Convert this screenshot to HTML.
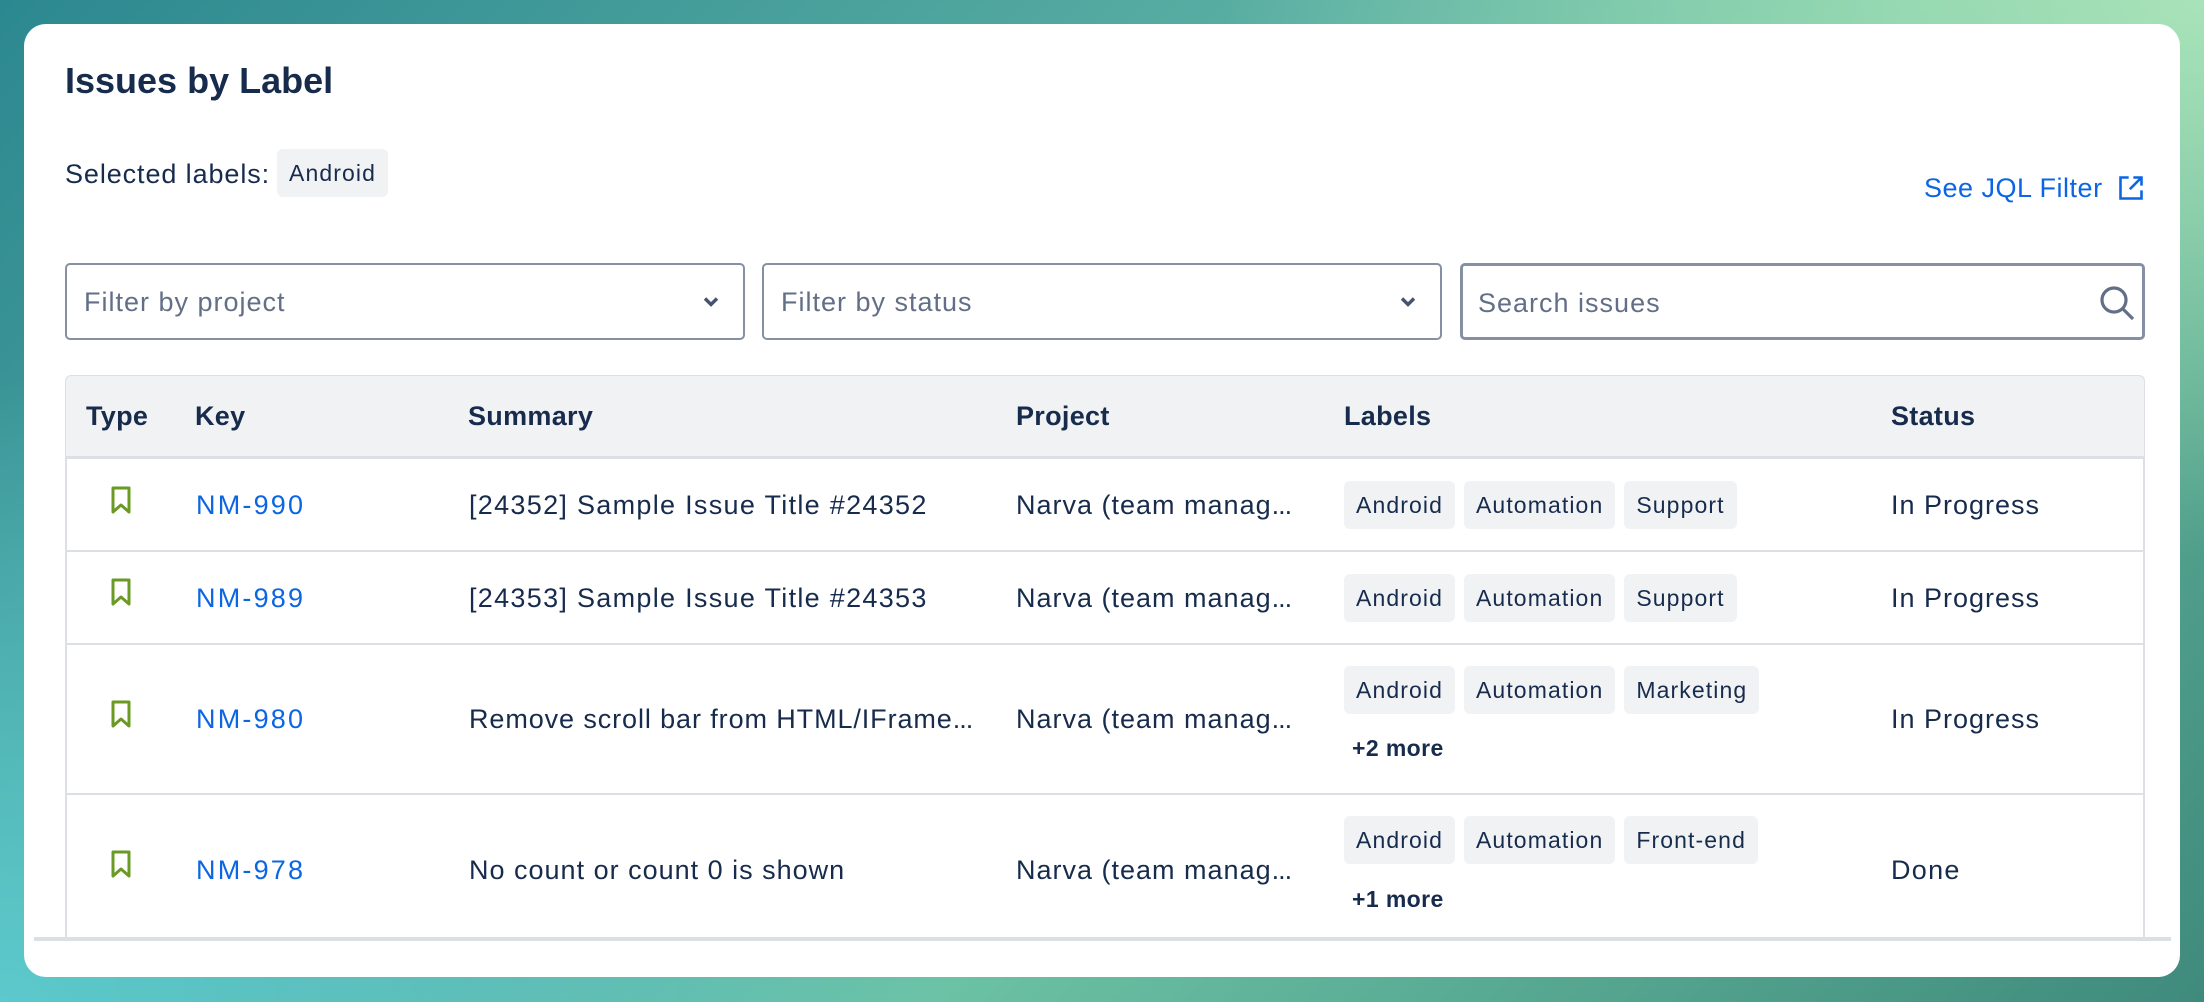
<!DOCTYPE html>
<html><head><meta charset="utf-8"><style>
*{margin:0;padding:0;box-sizing:border-box}
html,body{width:2204px;height:1002px;overflow:hidden}
body{font-family:"Liberation Sans",sans-serif;color:#172B4D;position:relative;
background:
radial-gradient(ellipse 1400px 900px at 0% 100%, #5cc9cc 0%, rgba(92,201,204,0) 70%),
radial-gradient(ellipse 1400px 800px at 100% 0%, #a9e3b8 0%, rgba(169,227,184,0) 70%),
linear-gradient(135deg,#2c8890 0%,#5fb3a5 45%,#6cc2a4 60%,#3f8a7c 100%);}
.a{position:absolute;white-space:nowrap}
.card{position:absolute;left:24px;top:24px;width:2156px;height:953px;background:#fff;border-radius:22px}
.t{font-size:27px;line-height:1;letter-spacing:1.3px}
.e{letter-spacing:-1px}
.tags{position:absolute;left:1344px;display:flex;gap:9px}
.tag{background:#F1F2F4;border-radius:6px;height:48px;font-size:23px;line-height:48px;padding:0 12px;color:#172B4D;letter-spacing:1.1px;white-space:nowrap}
.ptag{position:absolute}
.inp{position:absolute;top:263px;height:77px;border:2px solid #8590A2;border-radius:5px;background:#fff}
.ph{position:absolute;left:17px;top:24px;font-size:27px;color:#626F86;line-height:1;letter-spacing:1.0px;white-space:nowrap}
.hl{position:absolute;left:65px;width:2080px;height:2px;background:#DCDFE4}
.h{font-weight:bold;top:403px;letter-spacing:0.3px}
.key{color:#0C66E4;letter-spacing:2.2px}
.bm{position:absolute;left:111px}
.more{position:absolute;left:1352px;font-size:23px;font-weight:bold;line-height:1;letter-spacing:0.4px;white-space:nowrap}
.st{letter-spacing:1.0px}
</style></head><body>
<div class="card"></div>
<div class="a" style="left:65px;top:63px;font-size:36px;font-weight:bold;line-height:1">Issues by Label</div>
<div class="a t" style="left:65px;top:161px;letter-spacing:0.9px">Selected labels:</div>
<div class="tag ptag" style="left:277px;top:149px">Android</div>
<div class="a t" style="left:1924px;top:175px;color:#0C66E4;letter-spacing:0.5px">See JQL Filter</div>
<svg class="a" style="left:2117px;top:174px" width="28" height="28" viewBox="0 0 24 24" fill="none" stroke="#0C66E4" stroke-width="2.2"><path d="M10 3H3v18h18v-7"/><path d="M14 3h7v7M21 3l-10 10"/></svg>

<div class="inp" style="left:65px;width:680px"><div class="ph">Filter by project</div>
<svg style="position:absolute;right:23px;top:29px" width="18" height="16" viewBox="0 0 18 16"><path d="M3 4.5l6 6 6-6" fill="none" stroke="#44546F" stroke-width="3.4"/></svg></div>
<div class="inp" style="left:762px;width:680px"><div class="ph">Filter by status</div>
<svg style="position:absolute;right:23px;top:29px" width="18" height="16" viewBox="0 0 18 16"><path d="M3 4.5l6 6 6-6" fill="none" stroke="#44546F" stroke-width="3.4"/></svg></div>
<div class="inp" style="left:1460px;width:685px;border-width:3px"><div class="ph" style="left:15px;top:24px">Search issues</div>
<svg style="position:absolute;right:6px;top:18px" width="38" height="38" viewBox="0 0 38 38" fill="none" stroke="#626F86" stroke-width="3.2"><circle cx="16" cy="16" r="12"/><path d="M25 25l10 10"/></svg></div>

<div style="position:absolute;left:65px;top:375px;width:2080px;height:564px;border:2px solid #DCDFE4;border-bottom:none;border-radius:6px 6px 0 0"></div>
<div style="position:absolute;left:66px;top:376px;width:2078px;height:80px;background:#F1F2F4;border-radius:5px 5px 0 0"></div>
<div class="hl" style="top:456px;height:3px"></div>
<div class="a t h" style="left:86px">Type</div>
<div class="a t h" style="left:195px">Key</div>
<div class="a t h" style="left:468px">Summary</div>
<div class="a t h" style="left:1016px">Project</div>
<div class="a t h" style="left:1344px">Labels</div>
<div class="a t h" style="left:1891px">Status</div>

<!-- row1 -->
<svg class="bm" style="top:486px" width="20" height="28" viewBox="0 0 20 28"><path d="M2 2h16v24l-8-7-8 7z" fill="none" stroke="#6A9A23" stroke-width="3" stroke-linejoin="round"/></svg>
<div class="a t key" style="left:196px;top:492px">NM-990</div>
<div class="a t" style="left:469px;top:492px">[24352] Sample Issue Title #24352</div>
<div class="a t st" style="left:1016px;top:492px">Narva (team manag<span class="e">...</span></div>
<div class="tags" style="top:481px"><div class="tag">Android</div><div class="tag">Automation</div><div class="tag">Support</div></div>
<div class="a t st" style="left:1891px;top:492px">In Progress</div>
<div class="hl" style="top:550px"></div>

<!-- row2 -->
<svg class="bm" style="top:578px" width="20" height="28" viewBox="0 0 20 28"><path d="M2 2h16v24l-8-7-8 7z" fill="none" stroke="#6A9A23" stroke-width="3" stroke-linejoin="round"/></svg>
<div class="a t key" style="left:196px;top:585px">NM-989</div>
<div class="a t" style="left:469px;top:585px">[24353] Sample Issue Title #24353</div>
<div class="a t st" style="left:1016px;top:585px">Narva (team manag<span class="e">...</span></div>
<div class="tags" style="top:574px"><div class="tag">Android</div><div class="tag">Automation</div><div class="tag">Support</div></div>
<div class="a t st" style="left:1891px;top:585px">In Progress</div>
<div class="hl" style="top:643px"></div>

<!-- row3 -->
<svg class="bm" style="top:700px" width="20" height="28" viewBox="0 0 20 28"><path d="M2 2h16v24l-8-7-8 7z" fill="none" stroke="#6A9A23" stroke-width="3" stroke-linejoin="round"/></svg>
<div class="a t key" style="left:196px;top:706px">NM-980</div>
<div class="a t" style="left:469px;top:706px;letter-spacing:0.9px">Remove scroll bar from HTML/IFrame<span class="e">...</span></div>
<div class="a t st" style="left:1016px;top:706px">Narva (team manag<span class="e">...</span></div>
<div class="tags" style="top:666px"><div class="tag">Android</div><div class="tag">Automation</div><div class="tag">Marketing</div></div>
<div class="more" style="top:737px">+2 more</div>
<div class="a t st" style="left:1891px;top:706px">In Progress</div>
<div class="hl" style="top:793px"></div>

<!-- row4 -->
<svg class="bm" style="top:850px" width="20" height="28" viewBox="0 0 20 28"><path d="M2 2h16v24l-8-7-8 7z" fill="none" stroke="#6A9A23" stroke-width="3" stroke-linejoin="round"/></svg>
<div class="a t key" style="left:196px;top:857px">NM-978</div>
<div class="a t" style="left:469px;top:857px;letter-spacing:1.0px">No count or count 0 is shown</div>
<div class="a t st" style="left:1016px;top:857px">Narva (team manag<span class="e">...</span></div>
<div class="tags" style="top:816px"><div class="tag">Android</div><div class="tag">Automation</div><div class="tag">Front-end</div></div>
<div class="more" style="top:888px">+1 more</div>
<div class="a t" style="left:1891px;top:857px">Done</div>
<div style="position:absolute;left:34px;top:937px;width:2137px;height:4px;background:#DCDFE4"></div>
</body></html>
